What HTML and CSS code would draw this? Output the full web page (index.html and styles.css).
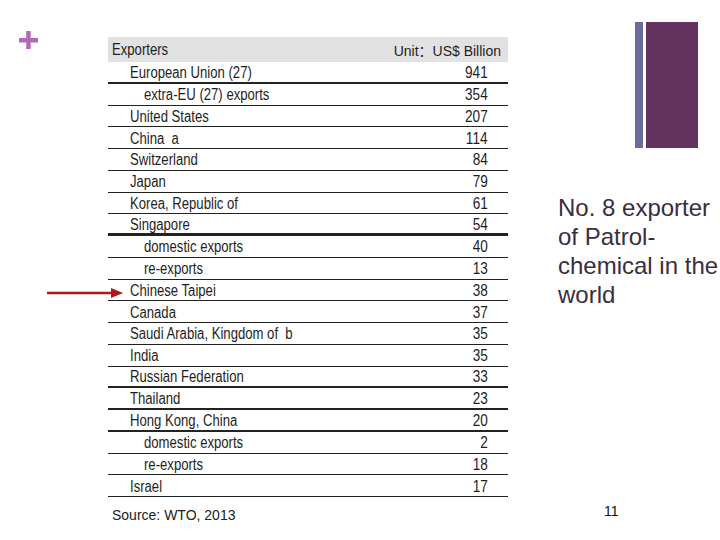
FILE: index.html
```html
<!DOCTYPE html>
<html>
<head>
<meta charset="utf-8">
<link rel="stylesheet" href="styles.css">
</head>
<body>
<div class="slide">
  <div class="gutter">
    <svg class="plus" width="19" height="18" viewBox="0 0 19 18"><rect x="0" y="7" width="19" height="4.5" fill="#b06bb6"/><rect x="7.2" y="0" width="4.5" height="18" fill="#b06bb6"/></svg>
  </div>
  <div class="main">
    <div class="table">
      <div class="hdr"><span class="nm">Exporters</span><span class="unit">Unit：US$ Billion</span></div>
      <div class="row thick"><span class="nm">European Union (27)</span><span class="val">941</span></div>
      <div class="row sub"><span class="nm">extra-EU (27) exports</span><span class="val">354</span></div>
      <div class="row"><span class="nm">United States</span><span class="val">207</span></div>
      <div class="row"><span class="nm">China&nbsp; a</span><span class="val">114</span></div>
      <div class="row"><span class="nm">Switzerland</span><span class="val">84</span></div>
      <div class="row"><span class="nm">Japan</span><span class="val">79</span></div>
      <div class="row"><span class="nm">Korea, Republic of</span><span class="val">61</span></div>
      <div class="row thicker"><span class="nm">Singapore</span><span class="val">54</span></div>
      <div class="row sub"><span class="nm">domestic exports</span><span class="val">40</span></div>
      <div class="row sub"><span class="nm">re-exports</span><span class="val">13</span></div>
      <div class="row"><span class="nm">Chinese Taipei</span><span class="val">38</span></div>
      <div class="row"><span class="nm">Canada</span><span class="val">37</span></div>
      <div class="row"><span class="nm">Saudi Arabia, Kingdom of&nbsp; b</span><span class="val">35</span></div>
      <div class="row"><span class="nm">India</span><span class="val">35</span></div>
      <div class="row thick"><span class="nm">Russian Federation</span><span class="val">33</span></div>
      <div class="row thick"><span class="nm">Thailand</span><span class="val">23</span></div>
      <div class="row thick"><span class="nm">Hong Kong, China</span><span class="val">20</span></div>
      <div class="row sub"><span class="nm">domestic exports</span><span class="val">2</span></div>
      <div class="row sub"><span class="nm">re-exports</span><span class="val">18</span></div>
      <div class="row"><span class="nm">Israel</span><span class="val">17</span></div>
    </div>
    <div class="source">Source: WTO, 2013</div>
  </div>
  <div class="side">
    <div class="deco"><div class="bar"></div><div class="block"></div></div>
    <p class="note">No. 8 exporter of Patrol-chemical in the world</p>
    <div class="pagenum">11</div>
  </div>
  <svg class="arrow" width="76" height="12" viewBox="0 0 76 12"><line x1="0" y1="6" x2="66" y2="6" stroke="#b0161c" stroke-width="2.6"/><polygon points="64,1 76,6 64,11" fill="#b0161c"/></svg>
</div>
</body>
</html>
```

FILE: styles.css
```css
html, body {
  margin: 0;
  padding: 0;
  background: #ffffff;
}
.slide {
  position: relative;
  width: 720px;
  height: 540px;
  display: flex;
  overflow: hidden;
  font-family: "Liberation Sans", Arial, sans-serif;
  color: #222;
}
.gutter {
  width: 89px;
  padding: 31px 0 0 19px;
}
.plus {
  display: block;
}
.main {
  width: 400px;
  padding-top: 37px;
}
.table {
  display: flex;
  flex-direction: column;
  font-family: "Liberation Sans", sans-serif;
  font-size: 16px;
  color: #1e1e1e;
}
.nm {
  display: inline-block;
  white-space: nowrap;
  transform: scaleX(0.82);
  transform-origin: left center;
}
.val {
  display: inline-block;
  white-space: nowrap;
  transform: scaleX(0.85);
  transform-origin: right center;
}
.hdr {
  height: 25px;
  background: #e2e2e2;
  display: flex;
  align-items: center;
  justify-content: space-between;
  padding: 0 7px 0 4px;
}
.unit {
  font-family: "Liberation Sans", "Noto Sans CJK SC", sans-serif;
  font-size: 14px;
}
.row {
  box-sizing: border-box;
  height: 21.75px;
  border-bottom: 1px solid #222;
  display: flex;
  align-items: center;
  justify-content: space-between;
  padding: 2px 20px 0 22px;
}
.row.sub {
  padding-left: 36px;
}
.row.thick {
  border-bottom-width: 2px;
}
.row.thicker {
  border-bottom-width: 3px;
}
.source {
  margin-top: 10px;
  padding-left: 4px;
  font-size: 14px;
  color: #222;
}
.side {
  flex: 1;
  display: flex;
  flex-direction: column;
  padding-left: 50px;
}
.deco {
  display: flex;
  gap: 3px;
  margin: 22px 0 0 77px;
  height: 126px;
}
.bar {
  width: 8px;
  background: #6b6a9e;
}
.block {
  width: 52px;
  background: #65335f;
}
.note {
  margin: 45px 0 0 0;
  font-size: 24px;
  line-height: 29px;
  color: #3b2d40;
  width: 162px;
}
.pagenum {
  margin: 194px 0 0 46px;
  font-size: 14px;
  color: #111;
}
.arrow {
  position: absolute;
  left: 47px;
  top: 287px;
}
```
